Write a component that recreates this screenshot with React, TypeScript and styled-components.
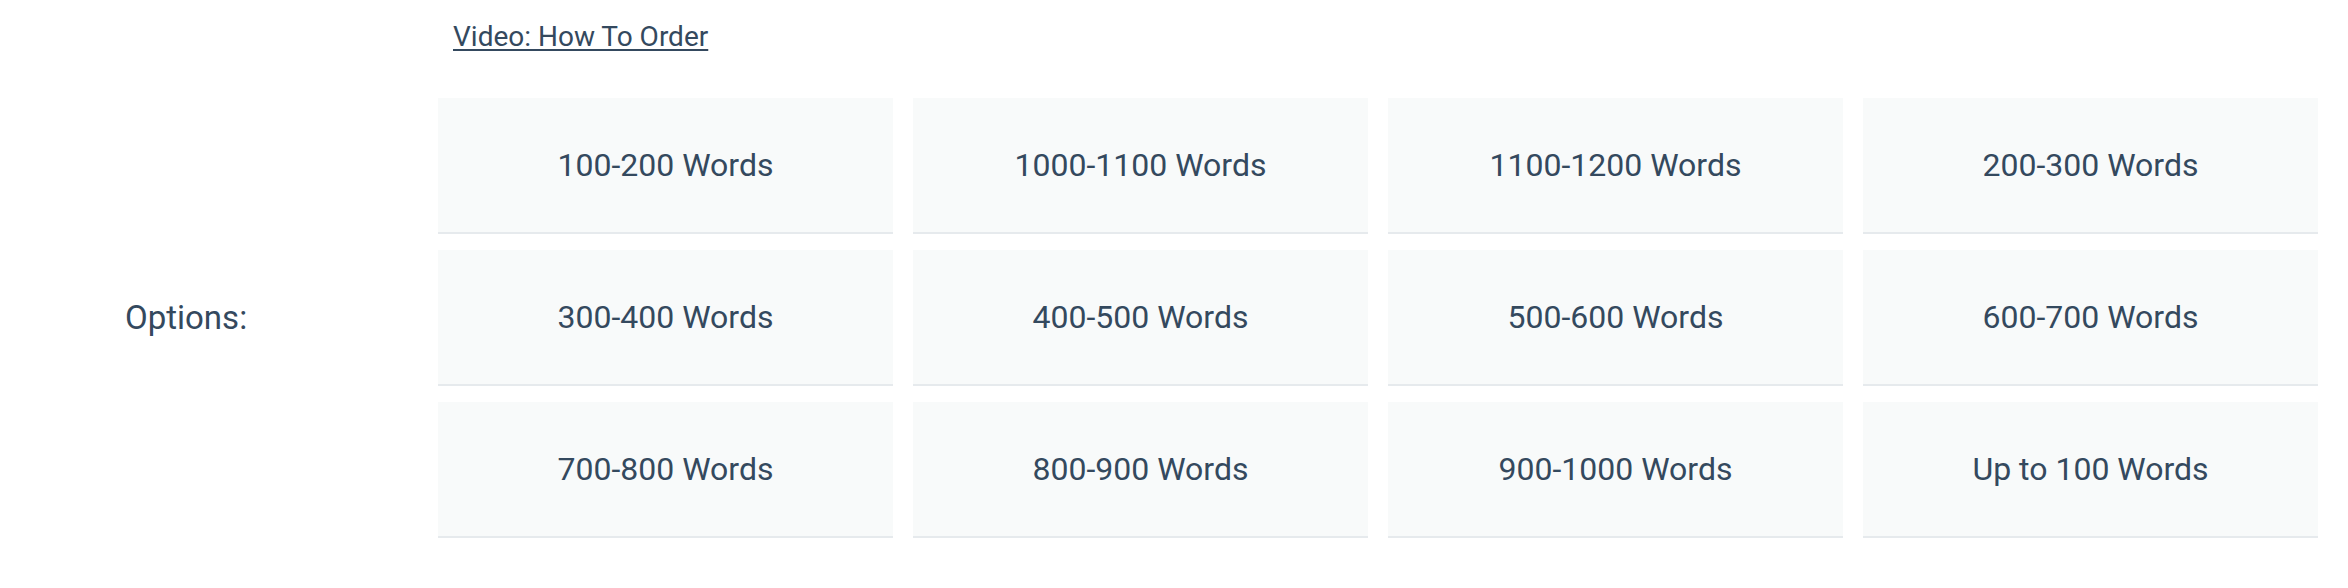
import styled, { createGlobalStyle } from 'styled-components';

const GlobalStyle = createGlobalStyle`
  body {
    margin: 0;
    background: #ffffff;
    font-family: Roboto, "Liberation Sans", Arial, sans-serif;
    color: #2c3e50;
  }
`;

const options = [
  '100-200 Words',
  '1000-1100 Words',
  '1100-1200 Words',
  '200-300 Words',
  '300-400 Words',
  '400-500 Words',
  '500-600 Words',
  '600-700 Words',
  '700-800 Words',
  '800-900 Words',
  '900-1000 Words',
  'Up to 100 Words',
];

function App() {
  return (
    <>
      <GlobalStyle />
      <Page>
        <LinkRow>
          <VideoLink href="#">Video: How To Order</VideoLink>
        </LinkRow>
        <OptionsRow>
          <Label>Options:</Label>
          <OptionGrid>
            {options.map((option) => (
              <OptionCard key={option} type="button">
                {option}
              </OptionCard>
            ))}
          </OptionGrid>
        </OptionsRow>
      </Page>
    </>
  );
}

const Page = styled.div`
  width: 100%;
  height: 588px;
  box-sizing: border-box;
  padding-right: 30px;
  display: flex;
  flex-direction: column;
`;

const LinkRow = styled.div`
  padding: 21px 0 0 453px;
  margin-bottom: 45px;
`;

const VideoLink = styled.a`
  font-size: 28px;
  line-height: 32px;
  color: #34495e;
  text-decoration: underline;
  text-decoration-thickness: 2px;
  text-underline-offset: 3px;
`;

const OptionsRow = styled.div`
  display: grid;
  grid-template-columns: 438px 1fr;
  align-items: center;
`;

const Label = styled.div`
  padding-left: 125px;
  font-size: 33px;
  line-height: 38px;
  color: #34495e;
`;

const OptionGrid = styled.div`
  display: grid;
  grid-template-columns: repeat(4, 1fr);
  column-gap: 20px;
  row-gap: 16px;
`;

const OptionCard = styled.button`
  height: 136px;
  display: flex;
  align-items: center;
  justify-content: center;
  background: #f8fafa;
  border: none;
  border-bottom: 2px solid #e6eaed;
  border-radius: 0;
  padding: 0;
  font-family: Roboto, "Liberation Sans", Arial, sans-serif;
  font-size: 32px;
  color: #34495e;
  cursor: pointer;
`;

export default App;
